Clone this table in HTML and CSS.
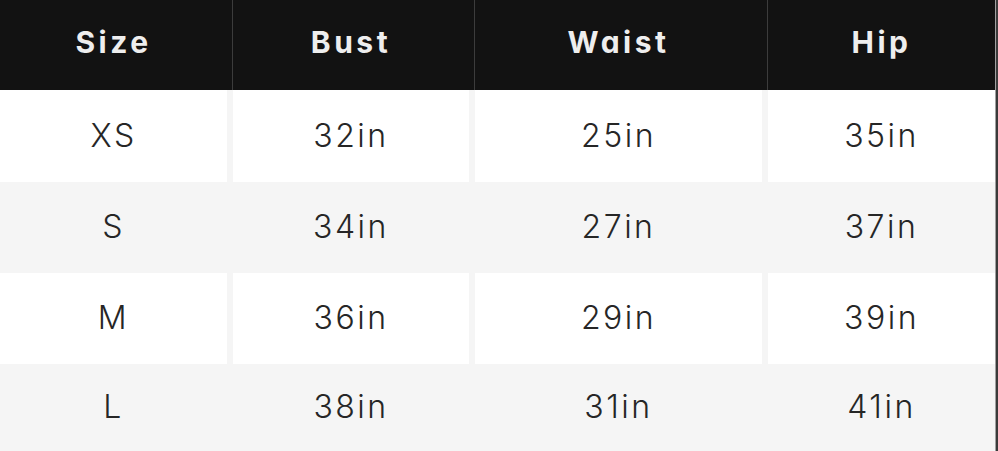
FILE: index.html
```html
<!DOCTYPE html>
<html>
<head>
<meta charset="utf-8">
<link rel="stylesheet" href="styles.css">
</head>
<body>
<div class="chart">
  <div class="row head">
    <div class="cell">Size</div>
    <div class="cell">Bust</div>
    <div class="cell">Waist</div>
    <div class="cell">Hip</div>
  </div>
  <div class="row odd first">
    <div class="cell">XS</div>
    <div class="cell">32in</div>
    <div class="cell">25in</div>
    <div class="cell">35in</div>
  </div>
  <div class="row even">
    <div class="cell">S</div>
    <div class="cell">34in</div>
    <div class="cell">27in</div>
    <div class="cell">37in</div>
  </div>
  <div class="row odd">
    <div class="cell">M</div>
    <div class="cell">36in</div>
    <div class="cell">29in</div>
    <div class="cell">39in</div>
  </div>
  <div class="row even last">
    <div class="cell">L</div>
    <div class="cell">38in</div>
    <div class="cell">31in</div>
    <div class="cell">41in</div>
  </div>
</div>
</body>
</html>
```

FILE: styles.css
```css
html, body {
  margin: 0;
  padding: 0;
  background: #3a3a3a;
  height: 451px;
  overflow: hidden;
}
.chart {
  width: 995px;
  border-right: 1px solid #a0a0a0;
  background: #f5f5f5;
  font-family: Inter, "Open Sans", sans-serif;
  font-feature-settings: "cv11" 1, "ss02" 1;
}
.row {
  display: grid;
  grid-template-columns: 227px 236px 287px 227px;
  column-gap: 6px;
  height: 91px;
}
.cell {
  display: flex;
  align-items: center;
  justify-content: center;
  font-size: 32px;
  letter-spacing: 2.5px;
  color: #262626;
  font-weight: 300;
  padding-bottom: 2px;
}
.head {
  height: 90px;
  background: #121212;
}
.head .cell {
  color: #eeeeee;
  font-weight: 700;
  font-size: 30px;
  letter-spacing: 3.5px;
  padding-bottom: 6px;
}
.head .cell + .cell {
  box-shadow: -1px 0 0 #3c3c3c;
}
.odd .cell {
  background: #ffffff;
}
.even .cell {
  background: #f5f5f5;
}
.first {
  height: 92px;
}
.last {
  height: 87px;
}
```
